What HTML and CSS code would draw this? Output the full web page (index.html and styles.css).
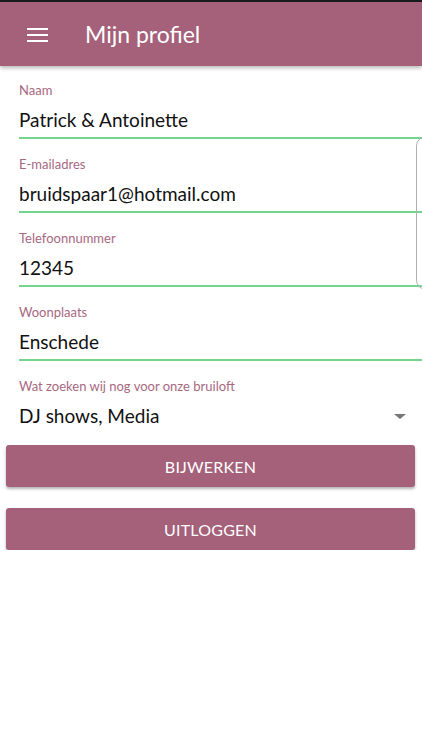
FILE: index.html
```html
<!DOCTYPE html>
<html lang="nl">
<head>
<meta charset="utf-8">
<title>Mijn profiel</title>
<link rel="stylesheet" href="styles.css">
</head>
<body>
<header class="appbar">
  <svg class="menu" width="22" height="16" viewBox="0 0 22 16" aria-hidden="true">
    <rect x="0" y="1" width="21" height="2" fill="#fff"/>
    <rect x="0" y="7" width="21" height="2" fill="#fff"/>
    <rect x="0" y="13" width="21" height="2" fill="#fff"/>
  </svg>
  <h1 class="title">Mijn profiel</h1>
</header>
<main class="form">
  <div class="field">
    <div class="label">Naam</div>
    <div class="value">Patrick &amp; Antoinette</div>
  </div>
  <div class="field">
    <div class="label">E-mailadres</div>
    <div class="value">bruidspaar1@hotmail.com</div>
  </div>
  <div class="field">
    <div class="label">Telefoonnummer</div>
    <div class="value">12345</div>
  </div>
  <div class="field">
    <div class="label">Woonplaats</div>
    <div class="value">Enschede</div>
  </div>
  <div class="field select">
    <div class="label">Wat zoeken wij nog voor onze bruiloft</div>
    <div class="value select-row"><span>DJ shows, Media</span><span class="arrow"></span></div>
  </div>
  <div class="buttons">
    <button class="btn">Bijwerken</button>
    <button class="btn">Uitloggen</button>
  </div>
  <div class="edge"></div>
</main>
</body>
</html>
```
FILE: styles.css
```css
html, body {
  margin: 0;
  padding: 0;
  background: #fff;
  font-family: Lato, "Open Sans", sans-serif;
}
.appbar {
  height: 64px;
  border-top: 2px solid #1a1a1a;
  background: #a5617a;
  display: flex;
  align-items: center;
  box-shadow: 0 2px 4px rgba(0,0,0,0.28);
  position: relative;
  z-index: 2;
}
.menu {
  margin-left: 27px;
  margin-top: 1px;
}
.title {
  margin: 0 0 0 36px;
  font-weight: 400;
  font-size: 23px;
  color: #fff;
  line-height: 28px;
}
.form {
  position: relative;
  padding-top: 16px;
}
.field {
  margin-left: 19px;
  margin-bottom: 17px;
  padding-bottom: 5px;
  border-bottom: 2px solid #72d690;
}
.field.select {
  border-bottom: none;
  padding-bottom: 0;
  margin-bottom: 17px;
  margin-right: 16px;
}
.label {
  font-size: 13px;
  line-height: 16px;
  color: #a8687f;
  margin-bottom: 10px;
}
.value {
  font-size: 19px;
  line-height: 24px;
  color: #111;
}
.select-row {
  display: flex;
  align-items: center;
  justify-content: space-between;
}
.arrow {
  width: 0;
  height: 0;
  border-left: 6px solid transparent;
  border-right: 6px solid transparent;
  border-top: 5px solid #777;
}
.buttons {
  display: flex;
  flex-direction: column;
  gap: 21px;
  padding: 0 7px 0 6px;
}
.btn {
  height: 42px;
  border: none;
  border-radius: 3px;
  background: #a5617a;
  color: #fff;
  font-family: Lato, "Open Sans", sans-serif;
  font-size: 16px;
  text-transform: uppercase;
  letter-spacing: 0.2px;
  box-shadow: 0 2px 3px rgba(0,0,0,0.3);
}
.edge {
  position: absolute;
  top: 70px;
  left: 416px;
  width: 20px;
  height: 152px;
  border: 1px solid #b0b0b0;
  border-radius: 10px;
  background: transparent;
}
```
